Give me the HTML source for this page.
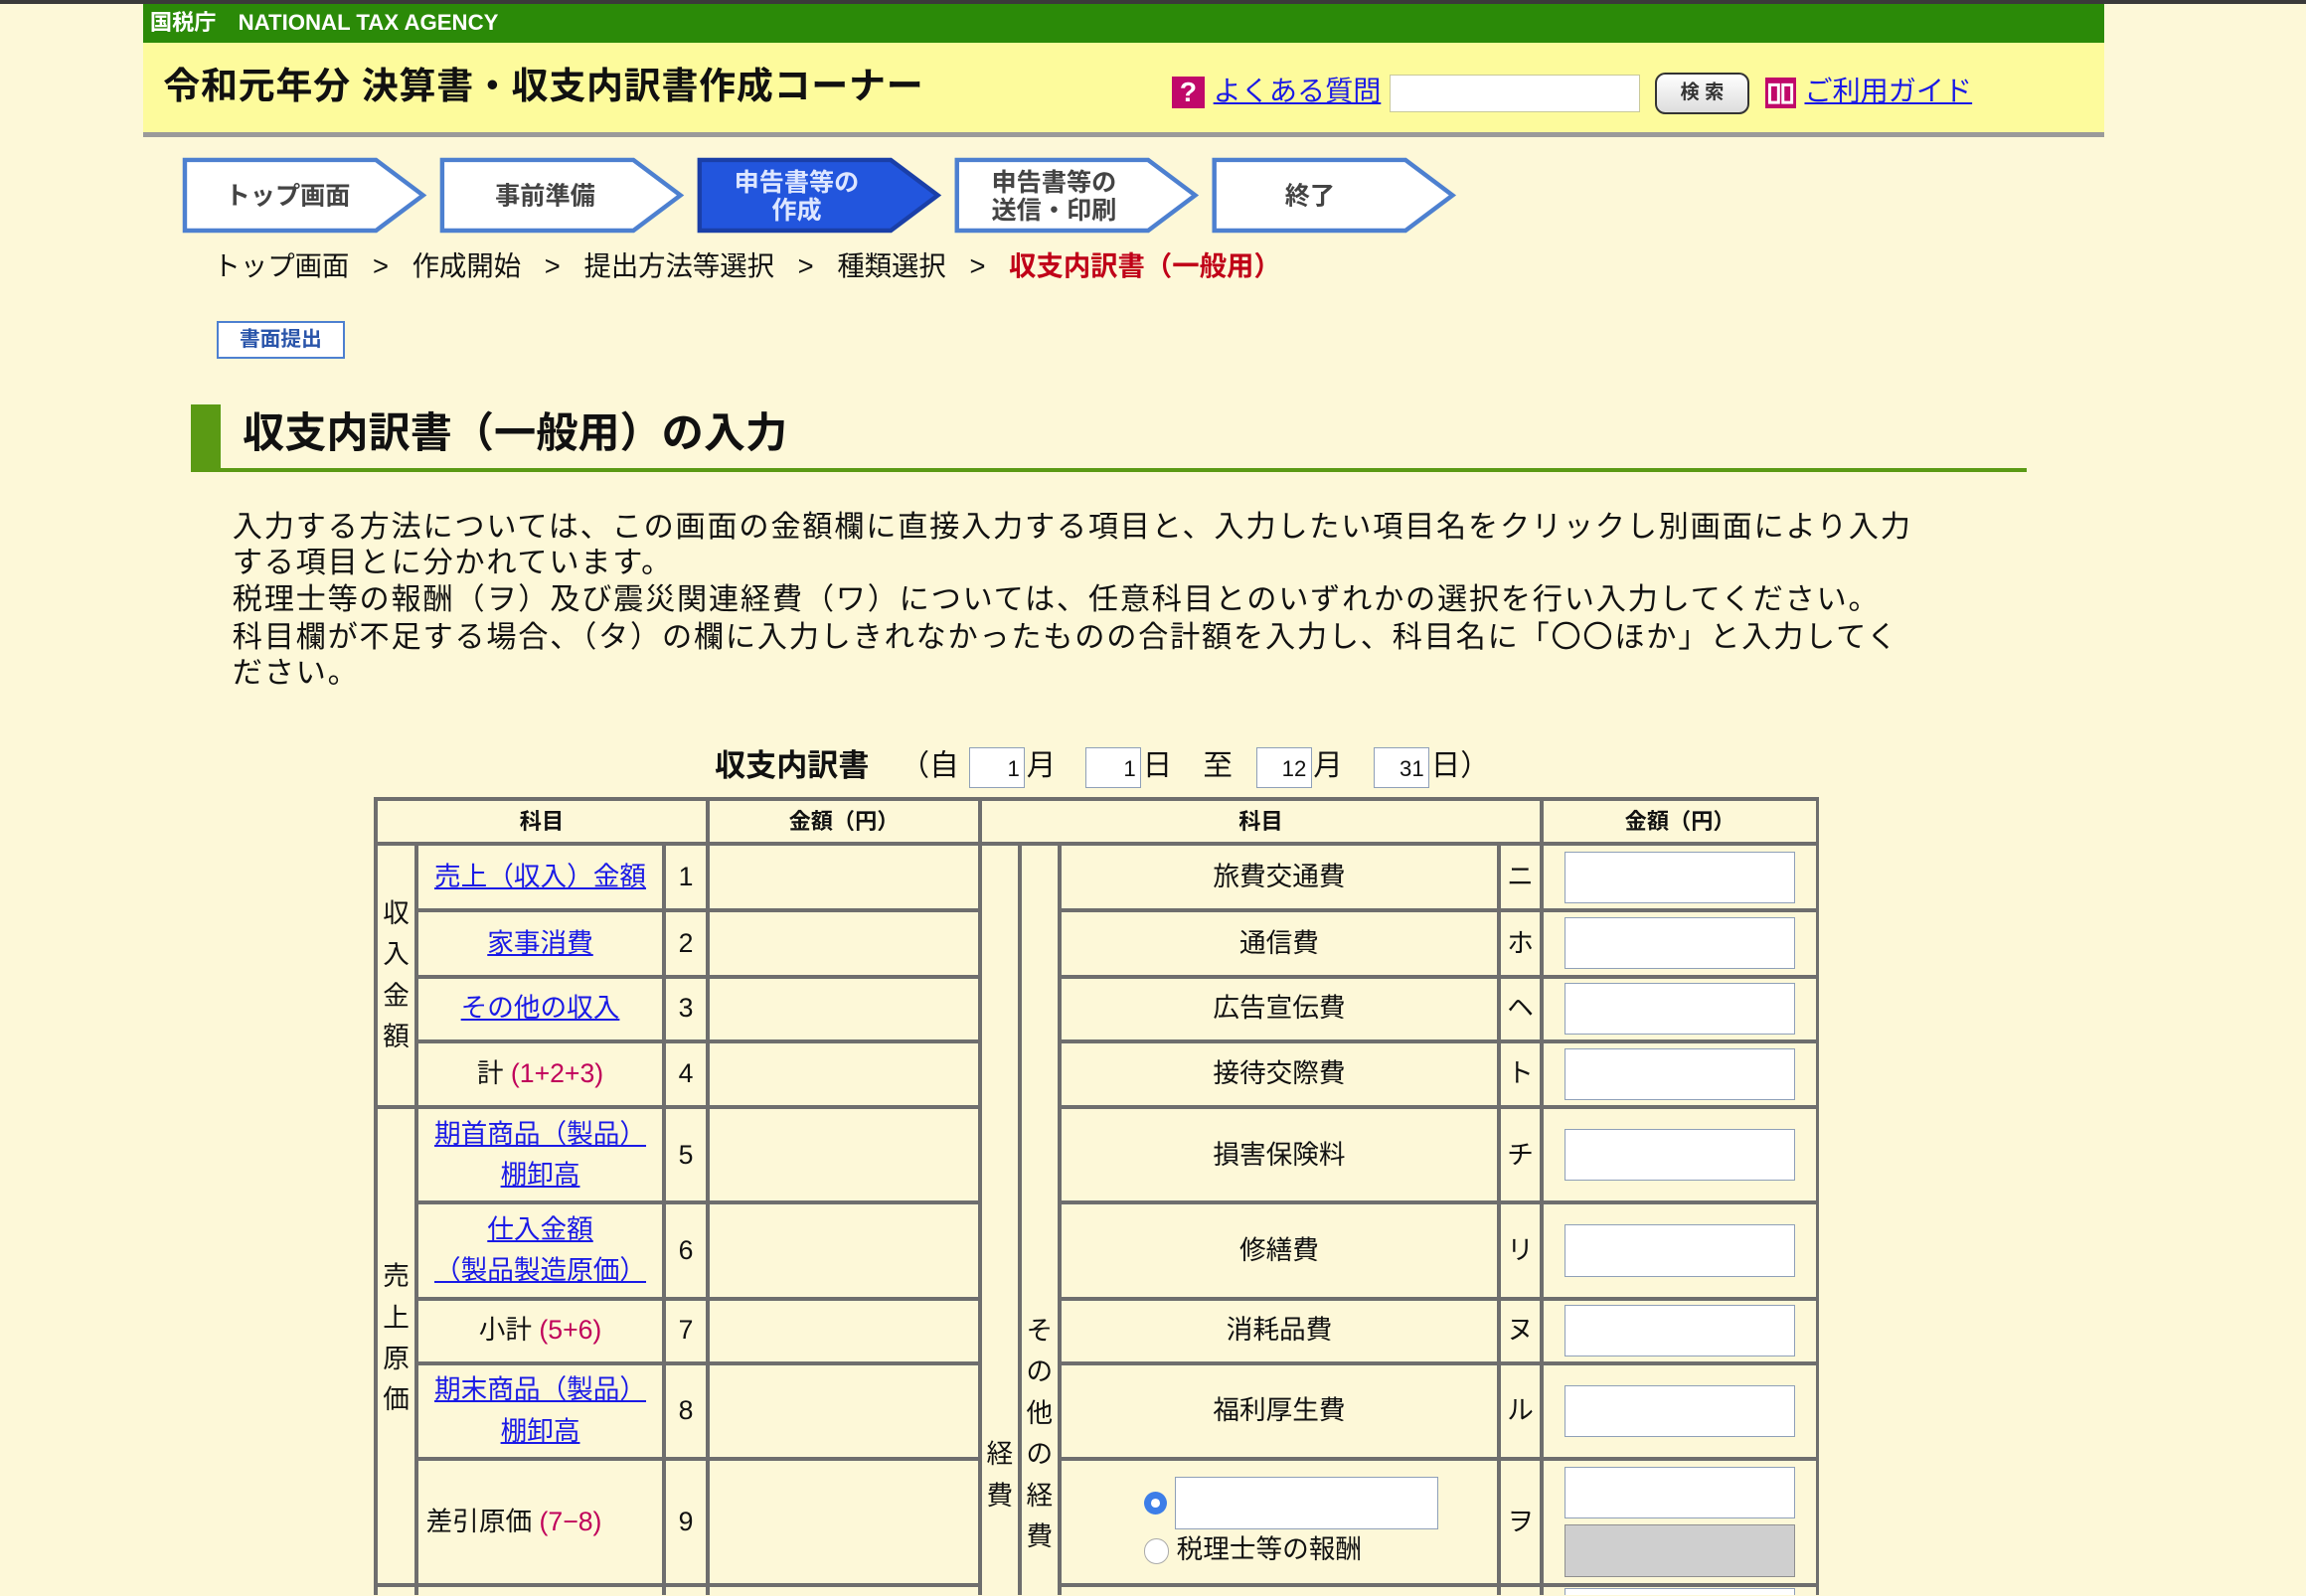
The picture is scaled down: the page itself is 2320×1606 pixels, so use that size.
<!DOCTYPE html>
<html><head><meta charset="utf-8">
<style>
html,body{margin:0;padding:0;width:2320px;height:1606px;overflow:hidden;background:#fdf8d8;}
#w{zoom:1.4796;position:relative;width:1568px;height:1085px;overflow:hidden;font-family:"Liberation Sans","Noto Sans CJK JP",sans-serif;color:#111;}
.a{position:absolute;white-space:nowrap}
a{color:#1a1ae6;text-decoration:underline}
table{border-collapse:collapse;table-layout:fixed;font-size:18px}
td{border:3px solid #6e6e6e;padding:0;text-align:center;vertical-align:middle;line-height:28px}
.n{color:#c0005a}
.inp{display:inline-block;width:155px;height:34px;background:#fff;border:1px solid #8fa0b8;vertical-align:middle}
.g{background:#cfcfcf;border-color:#8f8f8f}
.bx{position:absolute;top:508px;width:38px;height:28px;border:1px solid #8fa0b8;background:#fff;text-align:right;font-size:15px;line-height:28px;padding-right:3px;box-sizing:border-box}
.sep{margin:0 16px}
</style></head><body><div id="w">
<div class="a" style="left:0;top:0;width:1568px;height:3px;background:#3a3a3a"></div>
<div class="a" style="left:97px;top:3px;width:1334px;height:26px;background:#2b8a08;color:#fff;font-weight:bold;font-size:15px;line-height:26px;padding-left:5px;box-sizing:border-box">国税庁　NATIONAL TAX AGENCY</div>
<div class="a" style="left:97px;top:29px;width:1334px;height:62px;background:#fdfb9c"></div>
<div class="a" style="left:97px;top:90px;width:1334px;height:3px;background:#9a9a9a"></div>
<div class="a" style="left:111px;top:42px;font-size:25px;font-weight:bold;line-height:34px;letter-spacing:0.5px">令和元年分 決算書・収支内訳書作成コーナー</div>
<div class="a" style="left:797px;top:52px;width:22px;height:22px;background:#c0086a;color:#fff;font-weight:bold;font-size:19px;line-height:22px;text-align:center">?</div>
<div class="a" style="left:825px;top:48px;font-size:19px;line-height:28px"><a>よくある質問</a></div>
<div class="a" style="left:945px;top:51px;width:169px;height:24px;background:#fff;border:1px solid #c9c99a"></div>
<div class="a" style="left:1125px;top:49px;width:62px;height:26px;border:2px solid #333;border-radius:7px;background:linear-gradient(#fff,#ddd);font-size:13px;font-weight:bold;line-height:26px;text-align:center;color:#333">検 索</div>
<svg class="a" style="left:1200px;top:53px" width="21" height="21"><rect width="21" height="21" fill="#c0086a"/><path d="M3 5h6v12H3zM12 5h6v12h-6z" fill="none" stroke="#fff" stroke-width="2"/></svg>
<div class="a" style="left:1227px;top:48px;font-size:19px;line-height:28px"><a>ご利用ガイド</a></div>

<svg class="a" style="left:124px;top:107px" width="880" height="54">
<g stroke="#4d80d0" stroke-width="3" font-family="Liberation Sans,Noto Sans CJK JP,sans-serif" font-weight="bold" font-size="17" text-anchor="middle">
<polygon points="2,2 132,2 164,26 132,50 2,50" fill="#fff"/>
<polygon points="177,2 307,2 339,26 307,50 177,50" fill="#fff"/>
<polygon points="352,2 482,2 514,26 482,50 352,50" fill="#2255dd" stroke="#1a3fa8"/>
<polygon points="527,2 657,2 689,26 657,50 527,50" fill="#fff"/>
<polygon points="702,2 832,2 864,26 832,50 702,50" fill="#fff"/>
<g stroke="none" fill="#444">
<text x="72" y="32">トップ画面</text>
<text x="247" y="32">事前準備</text>
<text x="418" y="23" fill="#dde6ff">申告書等の</text><text x="418" y="42" fill="#dde6ff">作成</text>
<text x="593" y="23">申告書等の</text><text x="593" y="42">送信・印刷</text>
<text x="767" y="32">終了</text>
</g></g></svg>

<div class="a" style="left:145px;top:167px;font-size:18.5px;line-height:28px">トップ画面<span class="sep">&gt;</span>作成開始<span class="sep">&gt;</span>提出方法等選択<span class="sep">&gt;</span>種類選択<span class="sep">&gt;</span><b style="color:#c00018">収支内訳書（一般用）</b></div>
<div class="a" style="left:147px;top:218px;width:85px;height:23px;border:2px solid #4d80d0;background:#fff;color:#2a55aa;font-size:14px;font-weight:bold;line-height:23px;text-align:center">書面提出</div>

<div class="a" style="left:130px;top:275px;width:20px;height:46px;background:#5a9a14"></div>
<div class="a" style="left:130px;top:318px;width:1248px;height:3px;background:#5a9a14"></div>
<div class="a" style="left:165px;top:276px;font-size:28.5px;font-weight:bold;line-height:38px">収支内訳書（一般用）の入力</div>

<div class="a" style="left:158px;top:347px;font-size:20.4px;line-height:24px;letter-spacing:1.2px">入力する方法については、この画面の金額欄に直接入力する項目と、入力したい項目名をクリックし別画面により入力<br>する項目とに分かれています。<br><span style="display:block;margin-top:1px">税理士等の報酬（ヲ）及び震災関連経費（ワ）については、任意科目とのいずれかの選択を行い入力してください。</span><span style="display:block;margin-top:2px">科目欄が不足する場合、（タ）の欄に入力しきれなかったものの合計額を入力し、科目名に「〇〇ほか」と入力してく<br>ださい。</span></div>

<div class="a" style="left:486px;top:506px;font-size:21px;line-height:30px;font-weight:bold">収支内訳書</div>
<div class="a" style="left:612px;top:506px;font-size:20px;line-height:30px">（自</div>
<div class="bx" style="left:659px">1</div><div class="a" style="left:698px;top:506px;font-size:20px;line-height:30px">月</div>
<div class="bx" style="left:738px">1</div><div class="a" style="left:777px;top:506px;font-size:20px;line-height:30px">日</div>
<div class="a" style="left:818px;top:506px;font-size:20px;line-height:30px">至</div>
<div class="bx" style="left:854px">12</div><div class="a" style="left:893px;top:506px;font-size:20px;line-height:30px">月</div>
<div class="bx" style="left:934px">31</div><div class="a" style="left:973px;top:506px;font-size:20px;line-height:30px">日）</div>

<div class="a" style="left:254px;top:542px;width:983px;height:544px;overflow:hidden">
<table style="width:981px">
<colgroup><col style="width:28px"><col style="width:168px"><col style="width:30px"><col style="width:185px"><col style="width:27px"><col style="width:27px"><col style="width:299px"><col style="width:29px"><col style="width:188px"></colgroup>
<tr style="height:29px;font-weight:bold;font-size:15px"><td colspan="3">科目</td><td>金額（円）</td><td colspan="4">科目</td><td>金額（円）</td></tr>
<tr style="height:45px"><td rowspan="4" style="line-height:28px">収<br>入<br>金<br>額</td><td><a>売上（収入）金額</a></td><td>1</td><td></td>
<td rowspan="11" style="vertical-align:top;padding-top:400px">経<br>費</td><td rowspan="11" style="vertical-align:top;padding-top:316px">そ<br>の<br>他<br>の<br>経<br>費</td>
<td>旅費交通費</td><td>ニ</td><td><span class="inp"></span></td></tr>
<tr style="height:45px"><td><a>家事消費</a></td><td>2</td><td></td><td>通信費</td><td>ホ</td><td><span class="inp"></span></td></tr>
<tr style="height:44px"><td><a>その他の収入</a></td><td>3</td><td></td><td>広告宣伝費</td><td>ヘ</td><td><span class="inp"></span></td></tr>
<tr style="height:45px"><td>計 <span class="n">(1+2+3)</span></td><td>4</td><td></td><td>接待交際費</td><td>ト</td><td><span class="inp"></span></td></tr>
<tr style="height:65px"><td rowspan="5" style="vertical-align:top;padding-top:100px">売<br>上<br>原<br>価</td><td><a>期首商品（製品）<br>棚卸高</a></td><td>5</td><td></td><td>損害保険料</td><td>チ</td><td><span class="inp"></span></td></tr>
<tr style="height:65px"><td><a>仕入金額<br>（製品製造原価）</a></td><td>6</td><td></td><td>修繕費</td><td>リ</td><td><span class="inp"></span></td></tr>
<tr style="height:44px"><td>小計 <span class="n">(5+6)</span></td><td>7</td><td></td><td>消耗品費</td><td>ヌ</td><td><span class="inp"></span></td></tr>
<tr style="height:65px"><td><a>期末商品（製品）<br>棚卸高</a></td><td>8</td><td></td><td>福利厚生費</td><td>ル</td><td><span class="inp"></span></td></tr>
<tr style="height:86px"><td style="text-align:left;padding-left:5px">差引原価 <span class="n">(7−8)</span></td><td>9</td><td></td>
<td style="text-align:left;padding-left:56px"><div style="line-height:38px"><span style="display:inline-block;width:16px;height:16px;border-radius:50%;background:#3d7ee8;vertical-align:middle;position:relative"><span style="position:absolute;left:5px;top:5px;width:6px;height:6px;border-radius:50%;background:#fff"></span></span> <span class="inp" style="width:178px"></span></div><div><span style="display:inline-block;width:16px;height:16px;border-radius:50%;border:1px solid #aaa;background:#fff;vertical-align:middle"></span> 税理士等の報酬</div></td>
<td>ヲ</td><td><span class="inp"></span><br><span class="inp g" style="margin-top:4px"></span></td></tr>
<tr style="height:40px"><td></td><td></td><td></td><td></td><td></td><td></td><td><span class="inp"></span></td></tr>
<tr style="height:40px"><td></td><td></td><td></td><td></td><td></td><td></td><td></td></tr>
</table></div>
</div></body></html>
